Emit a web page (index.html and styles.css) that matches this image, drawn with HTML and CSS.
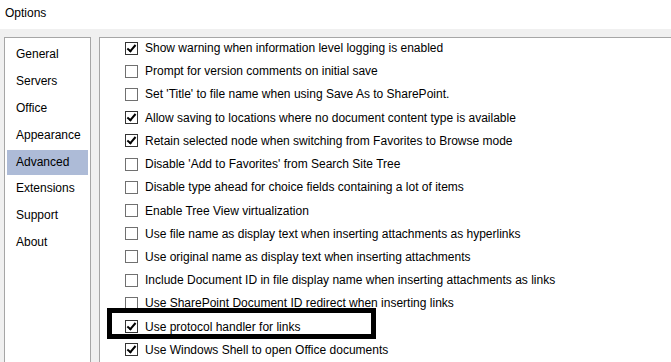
FILE: index.html
```html
<!DOCTYPE html>
<html lang="en">
<head>
    <meta charset="UTF-8">
    <title>Options</title>
    <link rel="stylesheet" href="styles.css">
</head>
<body>
    <div class="titlebar">Options</div>

    <div class="content">
        <ul class="nav">
            <li>General</li>
            <li>Servers</li>
            <li>Office</li>
            <li>Appearance</li>
            <li class="selected">Advanced</li>
            <li>Extensions</li>
            <li>Support</li>
            <li>About</li>
        </ul>

        <div class="settings">
            <ul class="checklist">
                <li class="checked"><span class="box"></span>Show warning when information level logging is enabled</li>
                <li><span class="box"></span>Prompt for version comments on initial save</li>
                <li><span class="box"></span>Set 'Title' to file name when using Save As to SharePoint.</li>
                <li class="checked"><span class="box"></span>Allow saving to locations where no document content type is available</li>
                <li class="checked"><span class="box"></span>Retain selected node when switching from Favorites to Browse mode</li>
                <li><span class="box"></span>Disable 'Add to Favorites' from Search Site Tree</li>
                <li><span class="box"></span>Disable type ahead for choice fields containing a lot of items</li>
                <li><span class="box"></span>Enable Tree View virtualization</li>
                <li><span class="box"></span>Use file name as display text when inserting attachments as hyperlinks</li>
                <li><span class="box"></span>Use original name as display text when inserting attachments</li>
                <li><span class="box"></span>Include Document ID in file display name when inserting attachments as links</li>
                <li><span class="box"></span>Use SharePoint Document ID redirect when inserting links</li>
                <li class="checked"><span class="box"></span>Use protocol handler for links</li>
                <li class="checked"><span class="box"></span>Use Windows Shell to open Office documents</li>
            </ul>
            <div class="callout"></div>
        </div>
    </div>
</body>
</html>
```

FILE: styles.css
```css
html,
body {
    margin: 0;
    padding: 0;
    height: 100%;
    overflow: hidden;
}

body {
    display: flex;
    flex-direction: column;
    font-family: "Segoe UI", "Liberation Sans", Arial, sans-serif;
    font-size: 12px;
    color: #000;
    background-color: #f0f0f0;
}

.titlebar {
    height: 29px;
    line-height: 27px;
    padding-left: 5px;
    background-color: #fff;
}

.content {
    flex: 1;
    min-height: 0;
    display: flex;
    gap: 8px;
    padding: 8px 0 0 4px;
    overflow: hidden;
}

.nav {
    list-style: none;
    margin: 0;
    padding: 4px 2px 0 2px;
    width: 81px;
    background-color: #fff;
    border: 1px solid #a6a6a6;
    border-bottom: none;
}

.nav li {
    height: 25px;
    line-height: 25px;
    margin-bottom: 1.9px;
    padding-left: 9px;
}

.nav li.selected {
    background-color: #adbbd7;
}

.settings {
    position: relative;
    flex: 1;
    background-color: #fff;
    border-top: 1px solid #a6a6a6;
    border-left: 1px solid #a6a6a6;
    overflow: hidden;
}

.checklist {
    list-style: none;
    margin: -1.6px 0 0 0;
    padding: 0 0 0 25px;
}

.checklist li {
    display: flex;
    align-items: center;
    height: 23.23px;
    white-space: nowrap;
}

.box {
    width: 13px;
    height: 13px;
    margin-right: 7px;
    box-sizing: border-box;
    border: 1px solid #707070;
    background-color: #fff;
    flex-shrink: 0;
    position: relative;
}

.checked .box {
    border-color: #333;
}

.checked .box::after {
    content: "";
    position: absolute;
    left: 3px;
    top: 0px;
    width: 3px;
    height: 7px;
    border-right: 2px solid #000;
    border-bottom: 2px solid #000;
    transform: rotate(40deg);
}

.callout {
    position: absolute;
    left: 7px;
    top: 270px;
    width: 259px;
    height: 21px;
    border: 5px solid #000;
}
```
